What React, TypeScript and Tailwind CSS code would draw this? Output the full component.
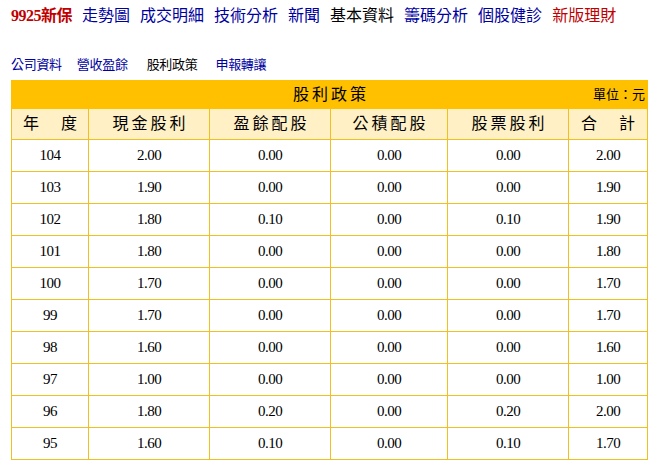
import React from 'react';

const NAV = [
    { label: '走勢圖', color: 'text-[#0000a0]' },
    { label: '成交明細', color: 'text-[#0000a0]' },
    { label: '技術分析', color: 'text-[#0000a0]' },
    { label: '新聞', color: 'text-[#0000a0]' },
    { label: '基本資料', color: 'text-black' },
    { label: '籌碼分析', color: 'text-[#0000a0]' },
    { label: '個股健診', color: 'text-[#0000a0]' },
    { label: '新版理財', color: 'text-[#c00000]' },
];

const SUB = [
    { label: '公司資料', cls: 'text-[#0000a0]' },
    { label: '營收盈餘', cls: 'text-[#0000a0]' },
    { label: '股利政策', cls: 'text-black ml-[4px]' },
    { label: '申報轉讓', cls: 'text-[#0000a0] ml-[3px]' },
];

// 年度, 現金股利, 盈餘配股, 公積配股, 股票股利, 合計
const ROWS = [
    ['104', '2.00', '0.00', '0.00', '0.00', '2.00'],
    ['103', '1.90', '0.00', '0.00', '0.00', '1.90'],
    ['102', '1.80', '0.10', '0.00', '0.10', '1.90'],
    ['101', '1.80', '0.00', '0.00', '0.00', '1.80'],
    ['100', '1.70', '0.00', '0.00', '0.00', '1.70'],
    ['99', '1.70', '0.00', '0.00', '0.00', '1.70'],
    ['98', '1.60', '0.00', '0.00', '0.00', '1.60'],
    ['97', '1.00', '0.00', '0.00', '0.00', '1.00'],
    ['96', '1.80', '0.20', '0.00', '0.20', '2.00'],
    ['95', '1.60', '0.10', '0.00', '0.10', '1.70'],
];

const HEADERS = ['年\u3000度', '現金股利', '盈餘配股', '公積配股', '股票股利', '合\u3000計'];
const WIDTHS = ['w-[77px]', 'w-[121px]', 'w-[121px]', 'w-[117px]', 'w-[121px]', 'w-[79px]'];

const font = "font-['Liberation_Serif','Noto_Sans_CJK_TC',serif]";

export default function App() {
    return (
        <div className={`w-[668px] h-[470px] bg-white px-[11px] pt-[6px] ${font}`}>
            <div className="flex items-center gap-[10px] text-[16px] leading-[20px] whitespace-nowrap">
                <span className="text-[#c00000] font-bold tracking-[-0.5px]">9925新保</span>
                {NAV.map(n => (
                    <span key={n.label} className={n.color}>{n.label}</span>
                ))}
            </div>

            <div className="flex items-center gap-[15px] mt-[31px] text-[13px] leading-[16px] whitespace-nowrap tracking-[-0.3px]">
                {SUB.map(s => (
                    <span key={s.label} className={s.cls}>{s.label}</span>
                ))}
            </div>

            <table className="mt-[7px] w-[636px] table-fixed border-collapse">
                <colgroup>
                    {WIDTHS.map((w, i) => <col key={i} className={w} />)}
                </colgroup>
                <thead>
                    <tr className="h-[28px] bg-[#ffc000]">
                        <th colSpan={6} className="border border-[#ffc000] p-0 font-normal">
                            <div className="relative flex items-center justify-center">
                                <span className="text-[16px] tracking-[3px] pl-[3px]">股利政策</span>
                                <span className="absolute right-[2px] text-[13px]">單位：元</span>
                            </div>
                        </th>
                    </tr>
                    <tr className="h-[31px] bg-[#fff0c6]">
                        {HEADERS.map(h => (
                            <th key={h} className="border border-[#f0c020] p-0 text-[16px] font-normal tracking-[3px] pl-[3px] text-center">
                                {h}
                            </th>
                        ))}
                    </tr>
                </thead>
                <tbody>
                    {ROWS.map(r => (
                        <tr key={r[0]} className="h-[32px]">
                            {r.map((c, i) => (
                                <td key={i} className="border border-[#f0c020] p-0 text-center text-[15px] tracking-[-0.5px]">
                                    {c}
                                </td>
                            ))}
                        </tr>
                    ))}
                </tbody>
            </table>
        </div>
    );
}
